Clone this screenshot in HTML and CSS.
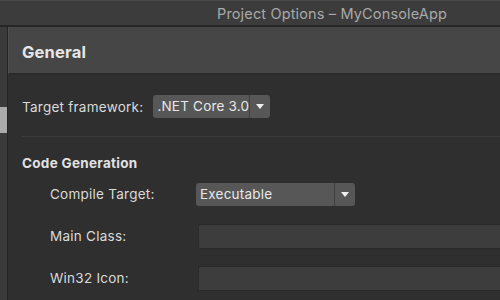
FILE: index.html
```html
<!DOCTYPE html>
<html>
<head>
  <meta charset="utf-8">
  <title>Project Options – MyConsoleApp</title>
  <link rel="stylesheet" href="styles.css">
</head>
<body>
  <div class="window">
    <div class="titlebar">Project Options – MyConsoleApp</div>
    <div class="body">
      <div class="sidebar">
        <div class="side-item"></div>
      </div>
      <div class="panel">
        <div class="panel-header">General</div>
        <div class="panel-content">
          <div class="row top-row">
            <span class="label">Target framework:</span>
            <div class="combo framework">
              <span class="combo-value">.NET Core 3.0</span>
              <span class="combo-arrow"></span>
            </div>
          </div>
          <div class="section">
            <h3>Code Generation</h3>
            <div class="field">
              <span class="label indent">Compile Target:</span>
              <div class="combo target">
                <span class="combo-value">Executable</span>
                <span class="combo-arrow"></span>
              </div>
            </div>
            <div class="field">
              <span class="label indent">Main Class:</span>
              <input type="text" class="text-input">
            </div>
            <div class="field">
              <span class="label indent">Win32 Icon:</span>
              <input type="text" class="text-input">
            </div>
          </div>
        </div>
      </div>
    </div>
  </div>
</body>
</html>
```

FILE: styles.css
```css
/* Dark dialog styling */
body {
  margin: 0;
  font-family: Inter, "Noto Sans", sans-serif;
  background-color: #2f2f2f;
  color: #dedede;
  overflow: hidden;
}
.window {
  width: 500px;
  height: 300px;
  display: flex;
  flex-direction: column;
}
.titlebar {
  height: 27px;
  box-sizing: border-box;
  border-top: 1px solid #4a4a4a;
  border-bottom: 2px solid #262626;
  background-color: #3c3c3c;
  color: #a9a9a9;
  font-size: 14.5px;
  letter-spacing: 0.15px;
  line-height: 25px;
  padding-left: 217px;
  white-space: nowrap;
}
.body {
  flex: 1;
  display: flex;
}
.sidebar {
  width: 7px;
  background-color: #3a3a3a;
  border-right: 1px solid #252525;
  padding-top: 80px;
}
.side-item {
  height: 26px;
  background-color: #ababab;
}
.panel {
  flex: 1;
  display: flex;
  flex-direction: column;
}
.panel-header {
  height: 48px;
  box-sizing: border-box;
  background-color: #464646;
  border-bottom: 2px solid #2a2a2a;
  border-left: 1px solid #505050;
  padding-left: 13px;
  font-size: 16.5px;
  font-weight: bold;
  letter-spacing: 0.2px;
  line-height: 50px;
  color: #e6e6e6;
}
.panel-content {
  flex: 1;
  padding-left: 14px;
}
.row {
  display: flex;
  align-items: center;
}
.top-row {
  height: 62px;
  box-sizing: border-box;
  padding-top: 2px;
  border-bottom: 1px solid #3c3c3c;
}
.label {
  font-size: 13.5px;
  letter-spacing: 0.25px;
  color: #dadada;
}
.framework {
  margin-left: 10px;
  width: 117px;
}
.combo {
  height: 23px;
  display: flex;
  background-color: #575757;
  border-radius: 3px;
}
.combo-value {
  flex: 1;
  font-size: 13.5px;
  letter-spacing: 0.2px;
  line-height: 23px;
  padding-left: 4px;
  color: #e8e8e8;
  border-right: 1px solid #3e3e3e;
  white-space: nowrap;
}
.combo-arrow {
  width: 20px;
  position: relative;
}
.combo-arrow::after {
  content: "";
  position: absolute;
  left: 6px;
  top: 9px;
  border-left: 4px solid transparent;
  border-right: 4px solid transparent;
  border-top: 5px solid #f0f0f0;
}
.section h3 {
  margin: 18px 0 11px;
  font-size: 13.5px;
  line-height: 16px;
  font-weight: bold;
  letter-spacing: 0.3px;
  color: #e2e2e2;
}
.field {
  display: flex;
  align-items: center;
  height: 24px;
  margin-bottom: 18px;
}
.indent {
  width: 146px;
  padding-left: 28px;
  flex-shrink: 0;
}
.target {
  width: 159px;
}
.text-input {
  flex: 1;
  height: 25px;
  margin-left: 2px;
  box-sizing: border-box;
  background-color: #3d3d3d;
  border: 1px solid #2a2a2a;
  border-right: none;
  border-radius: 2px 0 0 2px;
}
```
